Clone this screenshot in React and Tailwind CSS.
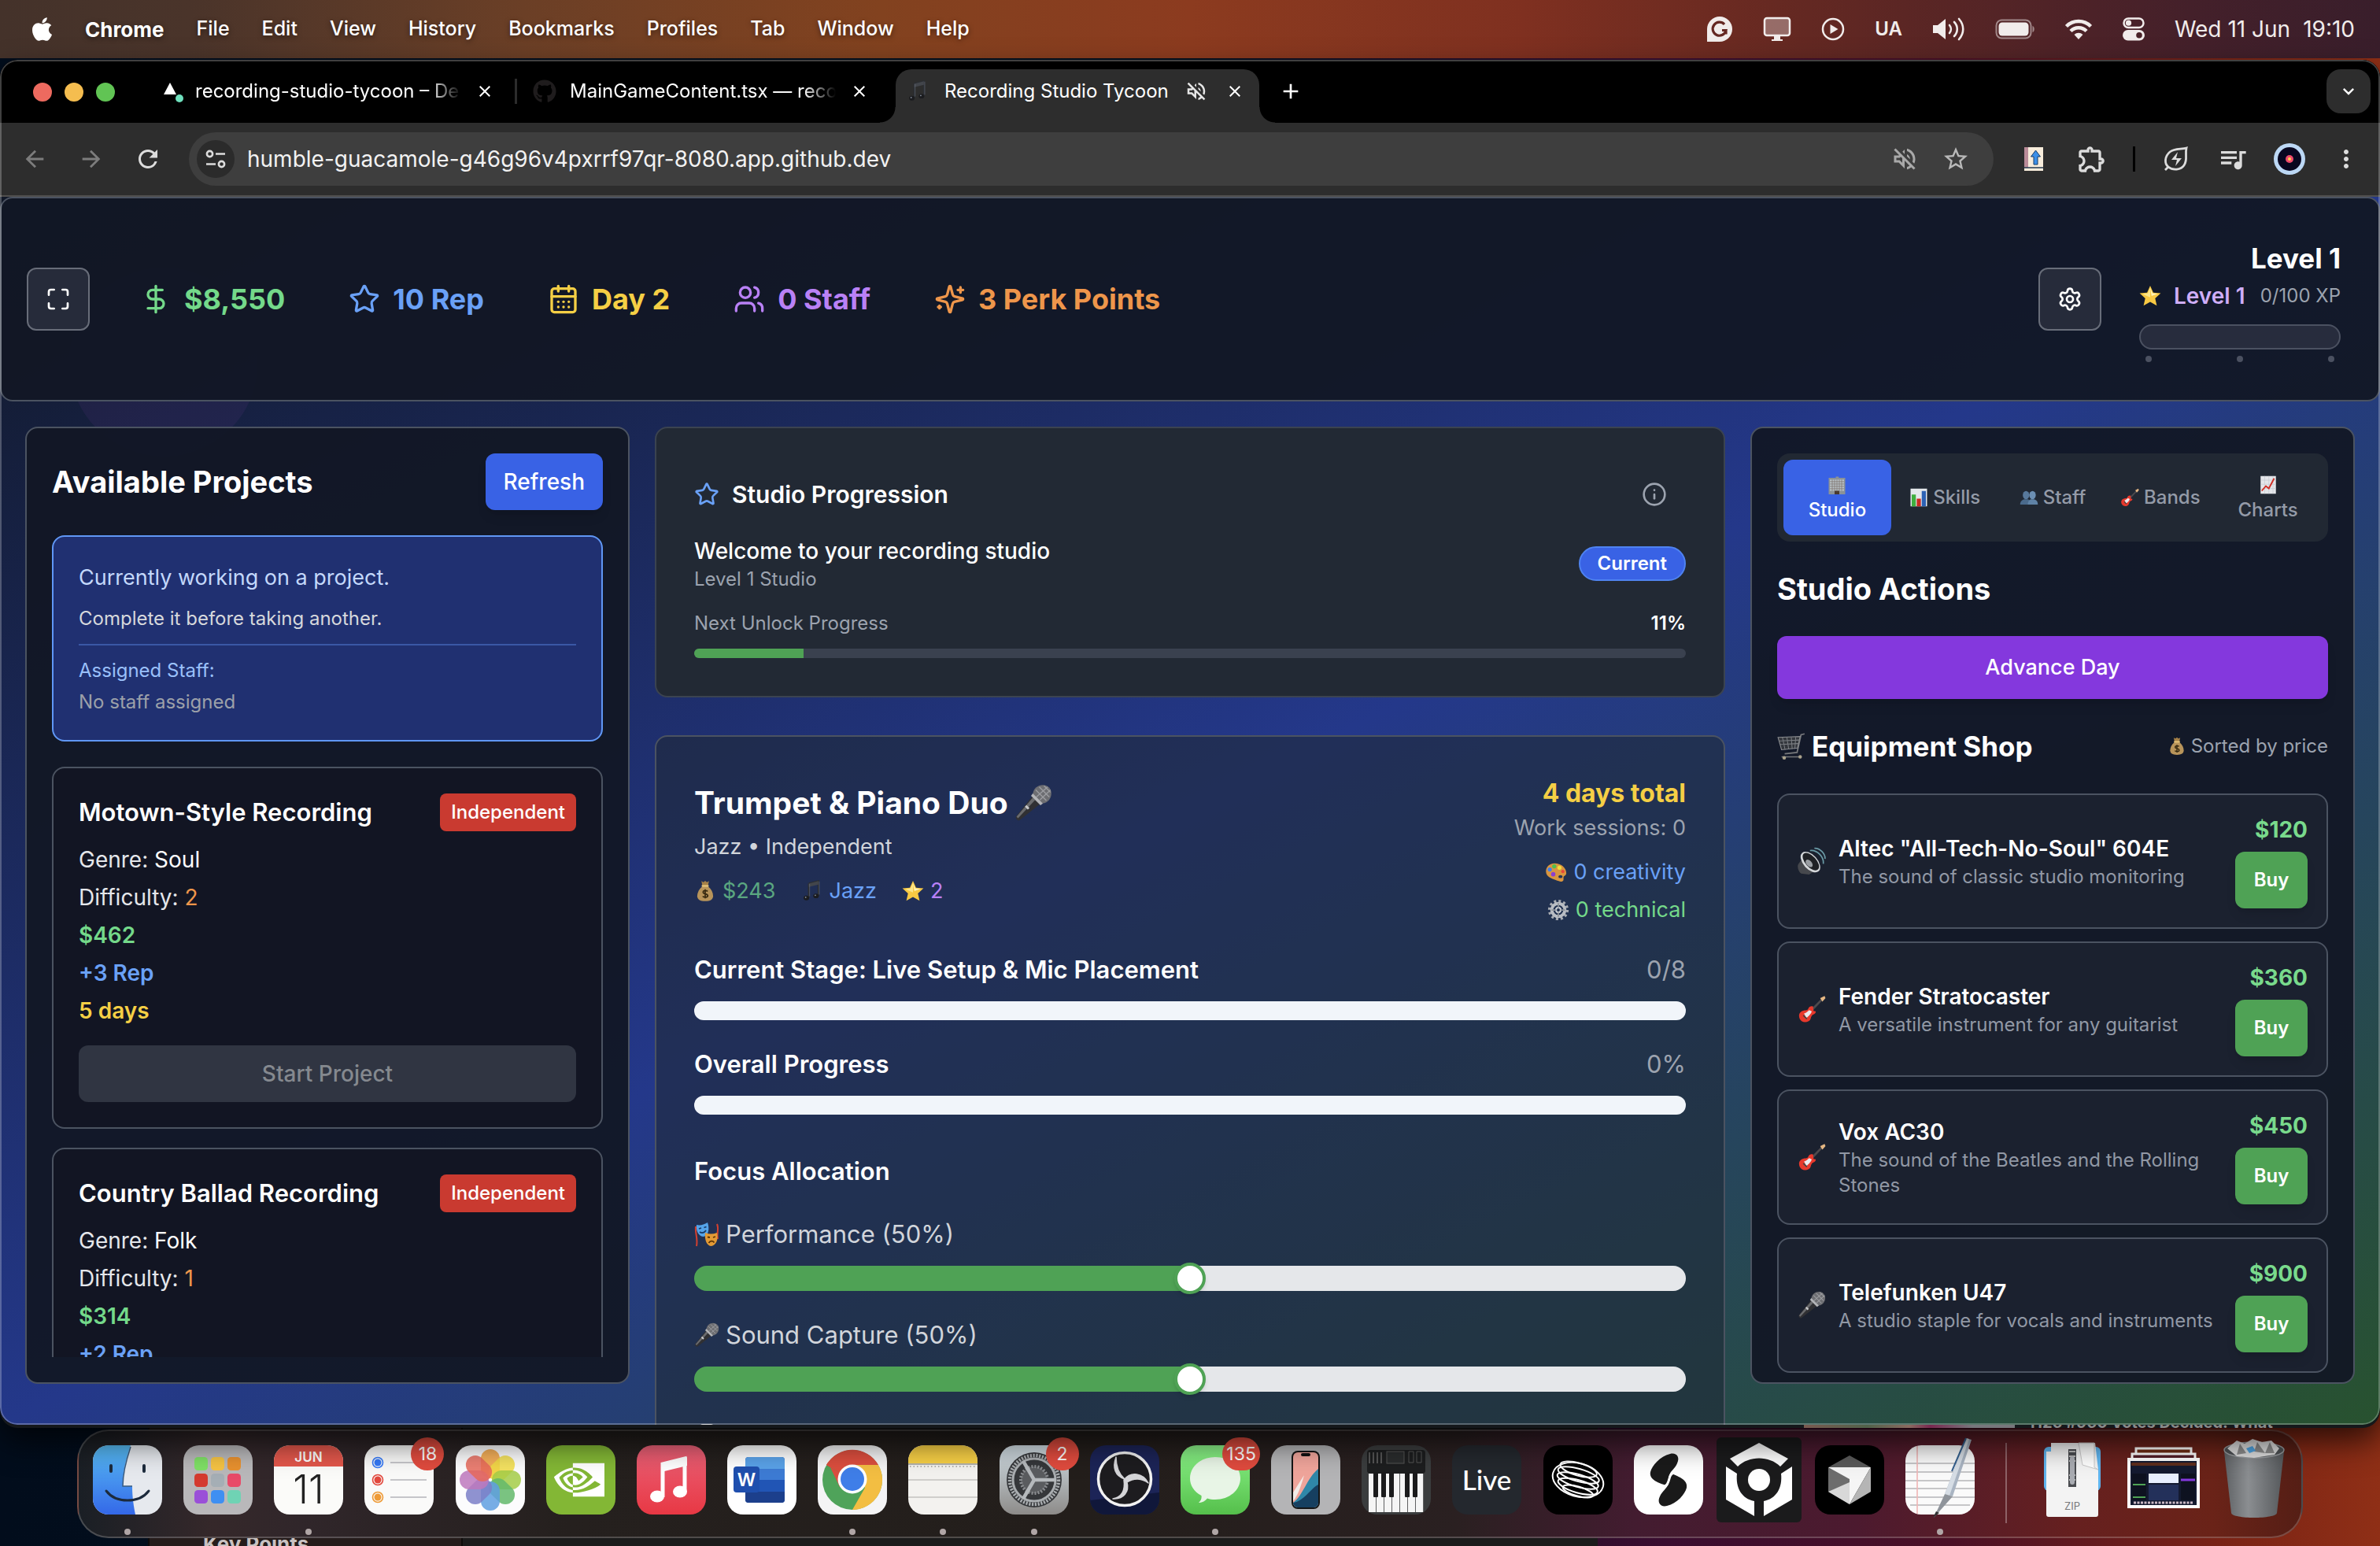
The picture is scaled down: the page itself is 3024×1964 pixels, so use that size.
import React from "react";
import { Star, CalendarDays, Users, DollarSign, Maximize, Settings, Info } from "lucide-react";
import {
  MdArrowBack, MdArrowForward, MdRefresh, MdStarBorder, MdOutlineExtension, MdQueueMusic,
  MdMoreVert, MdClose, MdAdd, MdKeyboardArrowDown, MdOutlineVolumeOff,
} from "react-icons/md";
import { FaApple, FaGithub } from "react-icons/fa";
import { SiNvidia } from "react-icons/si";

/* ---------- pictograms ---------- */

const pictograms = {
  star: (
    <>
      <path d="M16 1l4.500 10 10.800 1.100-8.100 7.300 2.400 10.600L16 24.600 6.400 30l2.400-10.600L.7 12.100 11.500 11z" fill="#f8c943" />
      <path d="M16 4l3.400 8 7.600.8-9 3.200z" fill="#fff3b8" />
      <path d="M16 4l-3.400 8-8 1 11.400 5z" fill="#fde68a" />
    </>
  ),
  mic: (
    <>
      <path d="M15 10.500l6.500 6.500L4.500 30.500c-1.600 1.200-4.300-1.500-3-3.200z" fill="#303033" />
      <path d="M15.500 11.500l2 2L3 29l-1.300-1.300z" fill="#6a6b6e" />
      <path d="M9.500 18.500l2.500 2.500" stroke="#c9cacc" strokeWidth="2" />
      <path d="M15.500 8.500C16 3.500 20 .8 24 .8c4.200 0 7.200 3 7.200 7.200 0 4-2.700 8-7.700 8.500z" fill="#6d6e72" />
      <path d="M18 5l9 9M21 2.500l8.500 8.500M25 1.500l5.500 5.500M28 2.500L18.500 11M30.500 5L21.500 13.500" stroke="#9c9da1" strokeWidth=".9" />
      <path d="M15.500 8l8.500 8.500-2 1.500-8-8z" fill="#b4b5b8" />
    </>
  ),
  guitar: (
    <>
      <path d="M13.500 17.500L27 4l1.500 1.500L15.500 19.500z" fill="#4d4a4d" />
      <path d="M25.500 3.500l5-2.500 1 2.500-3.500 4z" fill="#e6b884" />
      <path d="M17.500 13c-2-1-4.500 0-5.500 2.500-.8 2-2.500 1.500-5 2C2 18.500.5 23 2.500 27s6.500 4.500 10 2.500c3-1.800 2-4.500 3.800-6.500 1.500-1.800 3.700-1 4.200-4 .2-1-1.500-.5-2.500-1z" fill="#e8392c" />
      <path d="M13 17c-2 2-3.500 3-6 4 1.500.5 1.500 4 3.500 4.500 2-1.500 5-4.500 5.500-7z" fill="#e9ebee" />
      <path d="M6.500 23l4 4" stroke="#444" strokeWidth="1.500" />
    </>
  ),
  money: (
    <>
      <path d="M12 9c-5 4-7.500 9-7.500 14 0 5 4 7.500 11.500 7.500S27.500 28 27.500 23c0-5-2.500-10-7.500-14z" fill="#b8945a" />
      <path d="M10.500 1.500l3 1.500L16 1l2.500 2 3-1.500L20 8.500h-8z" fill="#a58148" />
      <path d="M11 8.500h10" stroke="#e9c77c" strokeWidth="2.500" />
      <path d="M19.500 16.500c-1-1.500-6.500-1.800-6.500 1.200s6.800 1.800 6.800 5c0 3-6 2.800-7.300.8M16 13.500v13" stroke="#3a2c12" strokeWidth="2" fill="none" />
    </>
  ),
  note: (
    <>
      <path d="M11 5l14-3.500v21M11 5v20" stroke="#2b2e33" strokeWidth="2.500" fill="none" />
      <path d="M11 5l14-3.500v5L11 10z" fill="#42454b" />
      <ellipse cx="7.500" cy="26" rx="4" ry="3.400" fill="#1b1c1f" />
      <ellipse cx="21.500" cy="23" rx="4" ry="3.400" fill="#1b1c1f" />
      <circle cx="6.500" cy="25" r="1" fill="#8a93a3" />
      <circle cx="20.500" cy="22" r="1" fill="#8a93a3" />
      <path d="M12.200 5.500v18M26.200 2v19" stroke="#6a7180" strokeWidth=".7" />
    </>
  ),
  palette: (
    <>
      <path d="M14 3C6 3 1 9 1.500 15.500 2 23 9 25 15 27c6 2 7.500 3.500 10.500 2 2.500-1.300 1-4 1.500-6 .5-1.800 4-2 4-5.500C31 9 23 3 14 3z" fill="#d9953f" />
      <ellipse cx="22.500" cy="22.500" rx="3" ry="2.200" fill="#21335a" />
      <circle cx="7" cy="12" r="3" fill="#3d7ff0" />
      <circle cx="13.500" cy="7.500" r="3" fill="#4fc04f" />
      <circle cx="21" cy="9.500" r="3" fill="#f2dc3c" />
      <circle cx="26" cy="15" r="2.400" fill="#e6483a" />
      <circle cx="12" cy="19" r="3.200" fill="#8b3fd0" />
    </>
  ),
  gear: (
    <>
      <circle cx="16" cy="16" r="13" fill="none" stroke="#a9adb3" strokeWidth="4" strokeDasharray="3.400 3.400" />
      <circle cx="16" cy="16" r="9.500" fill="none" stroke="#b9bdc3" strokeWidth="4.500" />
      <circle cx="16" cy="16" r="3.500" fill="none" stroke="#c9cdd3" strokeWidth="2.500" />
      <path d="M16 6v7M16 19v7M6 16h7M19 16h7" stroke="#8f949b" strokeWidth="2" />
    </>
  ),
  dial: (
    <>
      <rect x="6" y="1" width="20" height="30" rx="5" fill="#c9ccd2" />
      <circle cx="16" cy="16" r="7" fill="#55585f" />
    </>
  ),
  masks: (
    <>
      <path d="M2 6c-1 8 3 16 1 25M29 3c3 7-1 12 1 19" stroke="#d4402f" strokeWidth="2" fill="none" />
      <path d="M3 4c5 1 9 0 14-3 3 8 1 17-5 18C6 19 2 12 3 4z" fill="#55a4ea" />
      <path d="M6 9l3-1M12.500 7.500l3-1M7 13c3 2 6 1 8-2" stroke="#173a66" strokeWidth="1.800" fill="none" />
      <path d="M14 14c5 2 10 2 15 0 2 8-1 16-7 17-6 0-9-8-8-17z" fill="#e39a35" />
      <path d="M17 19.500l3 .5M24 20l3-1M18.500 27c2-3 5-3 7-.5" stroke="#5b3305" strokeWidth="1.800" fill="none" />
    </>
  ),
  speaker: (
    <>
      <path d="M1 19l6-8 14 15-8 5-9-1c-3-2-5-8-3-11z" fill="#46484d" />
      <ellipse cx="14.500" cy="17" rx="8" ry="14" transform="rotate(-42 14.500 17)" fill="#d4d7da" />
      <ellipse cx="15" cy="16.500" rx="6.200" ry="12" transform="rotate(-42 15 16.500)" fill="#1f2125" />
      <ellipse cx="13" cy="18.500" rx="3" ry="5" transform="rotate(-42 13 18.500)" fill="#9a9ea3" />
      <path d="M14 4c8-1 16 7 15 15M19 1.500c6-.5 12.500 6 12 12" stroke="#6a9aa6" strokeWidth="1.500" fill="none" />
    </>
  ),
  cart: (
    <>
      <path d="M31 2l-4 1-4.500 20-14 1.500" stroke="#77797c" strokeWidth="1.600" fill="none" />
      <path d="M1 6l25-1-3 13-18 2z" fill="#33363c" stroke="#8a8c90" strokeWidth="1" />
      <path d="M6 6l3 14M11 6l2 13M16 6l1 13M21 5.500L20 19M2 10l23-1M3 14l21-1" stroke="#7d8085" strokeWidth=".9" />
      <path d="M5 28h20" stroke="#77797c" strokeWidth="1.300" />
      <circle cx="8" cy="29" r="2" fill="#a9a28c" />
      <circle cx="26" cy="28" r="2" fill="#a9a28c" />
    </>
  ),
  building: (
    <>
      <path d="M2 4h12V2h5v2h11v28H2z" fill="#8b9297" />
      <path d="M4 7h24v19H4z" fill="#b9c2c7" />
      <path d="M4 10.500h24M4 14.500h24M4 18.500h24M4 22.500h24M8 7v19M12 7v19M16 7v19M20 7v19M24 7v19" stroke="#7d746d" strokeWidth="1" />
      <path d="M12 26h8v6h-8z" fill="#4a3a30" />
    </>
  ),
  bars: (
    <>
      <path d="M2 1h28v30H2z" fill="#e4e8ec" />
      <path d="M4 11h7v20H4z" fill="#3fae3f" />
      <path d="M12.500 18h7v13h-7z" fill="#c92a22" />
      <path d="M21 5h7v26h-7z" fill="#2d62b5" />
    </>
  ),
  people: (
    <>
      <ellipse cx="11" cy="12" rx="5.500" ry="7" fill="#58799c" />
      <ellipse cx="22" cy="12" rx="5.500" ry="7" fill="#6c8fb3" />
      <path d="M1 28c0-6 4-8 7-9h6c3 1 5 3 5 9z" fill="#4a6a8c" />
      <path d="M14 28c0-6 3-8 5-9h5c4 1 7 3 7 9z" fill="#5f82a6" />
    </>
  ),
  trend: (
    <>
      <path d="M3 1h26v30H3z" fill="#e4e6ea" />
      <path d="M3 8h26M3 15h26M3 22h26M10 1v30M17 1v30M24 1v30" stroke="#c3c8ce" strokeWidth=".8" />
      <path d="M5 26l7-8 5 4 9-17" stroke="#d02f26" strokeWidth="2.500" fill="none" />
    </>
  ),
};

function Pictogram({ name, className }) {
  return (
    <svg viewBox="0 0 32 32" aria-hidden="true" className={`shrink-0 ${className}`}>
      {pictograms[name]}
    </svg>
  );
}

/* ---------- macOS menu bar ---------- */

const menus = ["File", "Edit", "View", "History", "Bookmarks", "Profiles", "Tab", "Window", "Help"];

function MenuBar() {
  return (
    <header className="flex h-[74px] shrink-0 items-center justify-between bg-[linear-gradient(90deg,#44322a_0%,#4a342a_8%,#6b3f26_22%,#82421f_37%,#8c3b1f_50%,#7f3020_64%,#632822_76%,#44202a_92%,#391e2b_100%)] pr-8 pl-[40px] text-[25px] text-white">
      <nav className="flex items-center gap-[41px] [text-shadow:0_2px_6px_rgba(0,0,0,.5)]">
        <FaApple className="h-[34px] w-[27px]" />
        <span className="text-[26px] font-bold">Chrome</span>
        {menus.map((m) => (
          <span key={m} className="font-medium">{m}</span>
        ))}
      </nav>
      <div className="flex items-center gap-[38px] text-[#f1eceb]">
        <svg viewBox="0 0 34 34" className="size-[34px]">
          <path d="M17 1a16 16 0 0 1 0 32H1V17A16 16 0 0 1 17 1z" fill="currentColor" />
          <path d="M23 11a8.500 8.500 0 1 0 2 7.500h-5M25 18.500v5" fill="none" stroke="#642722" strokeWidth="3.200" />
        </svg>
        <svg viewBox="0 0 36 32" className="h-[32px] w-[36px]">
          <rect x="2" y="2" width="32" height="22" rx="3" fill="currentColor" fillOpacity=".35" stroke="currentColor" strokeWidth="2.500" />
          <path d="M14 25h8v4h3v2H11v-2h3z" fill="currentColor" />
        </svg>
        <svg viewBox="0 0 30 30" className="size-[30px]">
          <circle cx="15" cy="15" r="13" fill="none" stroke="currentColor" strokeWidth="2.500" />
          <path d="M11.500 9l10 6-10 6z" fill="currentColor" />
        </svg>
        <span className="text-[24px] font-semibold">UA</span>
        <svg viewBox="0 0 42 30" className="h-[30px] w-[42px]">
          <path d="M1 10h6l10-8v26L7 20H1z" fill="currentColor" />
          <path d="M22 10c2.500 3 2.500 7 0 10M28 6c5 5 5 13 0 18M34 2c7 8 7 18 0 26" fill="none" stroke="currentColor" strokeWidth="2.600" strokeLinecap="round" />
        </svg>
        <svg viewBox="0 0 50 26" className="h-[26px] w-[50px]">
          <rect x="1.500" y="1.500" width="44" height="23" rx="7" fill="none" stroke="currentColor" strokeOpacity=".5" strokeWidth="2" />
          <rect x="4.500" y="4.500" width="38" height="17" rx="4.500" fill="currentColor" />
          <path d="M47.500 9c3 1 3 7 0 8z" fill="currentColor" fillOpacity=".5" />
        </svg>
        <svg viewBox="0 0 36 28" className="h-[28px] w-[36px]">
          <path d="M2.500 10.500a22 22 0 0 1 31 0M8 16.500a14 14 0 0 1 20 0" fill="none" stroke="currentColor" strokeWidth="4.500" />
          <path d="M18 27l-5.500-6a8 8 0 0 1 11 0z" fill="currentColor" />
        </svg>
        <svg viewBox="0 0 28 30" className="h-[30px] w-[28px]">
          <rect x="1.500" y="1.500" width="25" height="11.500" rx="5.700" fill="none" stroke="currentColor" strokeWidth="2.500" />
          <circle cx="7.500" cy="7.200" r="3.600" fill="currentColor" />
          <rect x="0" y="16" width="28" height="13.500" rx="6.700" fill="currentColor" />
          <circle cx="21" cy="22.700" r="3.800" fill="#4a2228" />
        </svg>
        <span className="flex gap-4 text-[28px] whitespace-nowrap">
          <span>Wed 11 Jun</span>
          <span>19:10</span>
        </span>
      </div>
    </header>
  );
}

/* ---------- browser chrome ---------- */

function TabStrip() {
  return (
    <div className="flex h-[80px] shrink-0 items-end bg-black pr-3 text-[24px] text-[#e6e6e6]">
      <div className="flex h-[68px] w-[200px] shrink-0 items-center gap-4 pb-[10px] pl-[42px]">
        <span className="size-6 rounded-full bg-[#ed6a5f]" />
        <span className="size-6 rounded-full bg-[#f5bd4f]" />
        <span className="size-6 rounded-full bg-[#61c454]" />
      </div>
      <div className="flex h-[68px] w-[454px] shrink-0 items-center pb-3">
        <svg viewBox="0 0 32 32" className="ml-1 size-8">
          <path d="M12 5l8 15H4z" fill="#fff" />
          <circle cx="24" cy="25" r="5" fill="#6fe0bd" />
        </svg>
        <span className="ml-3 w-[338px] overflow-hidden whitespace-nowrap text-white [mask-image:linear-gradient(90deg,#000_88%,transparent)]">recording-studio-tycoon – De</span>
        <button aria-label="Close tab" className="ml-[18px]"><MdClose className="size-6 text-white" /></button>
      </div>
      <div className="flex h-[68px] w-[484px] shrink-0 items-center pb-3">
        <span className="h-8 w-[3px] bg-[#2c2c2c]" />
        <FaGithub className="ml-[20px] size-[30px] text-[#1f1c1d]" />
        <span className="ml-[17px] w-[338px] overflow-hidden whitespace-nowrap text-white [mask-image:linear-gradient(90deg,#000_88%,transparent)]">MainGameContent.tsx — reco</span>
        <button aria-label="Close tab" className="ml-[18px]"><MdClose className="size-6 text-white" /></button>
      </div>
      <div className="relative flex h-[68px] w-[462px] shrink-0 items-center rounded-t-[20px] bg-[#2d2d2d] pb-3">
        <span className="absolute bottom-0 -left-5 size-5 bg-[radial-gradient(circle_at_0_0,transparent_19px,#2d2d2d_20px)]" />
        <span className="absolute -right-5 bottom-0 size-5 bg-[radial-gradient(circle_at_100%_0,transparent_19px,#2d2d2d_20px)]" />
        <Pictogram name="note" className="ml-[14px] size-7" />
        <span className="ml-5 w-[290px] whitespace-nowrap text-white">Recording Studio Tycoon</span>
        <MdOutlineVolumeOff className="ml-[15px] size-[30px] text-[#e6e6e6]" />
        <button aria-label="Close tab" className="ml-[22px]"><MdClose className="size-6 text-white" /></button>
      </div>
      <button aria-label="New tab" className="mb-[24px] ml-[24px]"><MdAdd className="size-8 text-white" /></button>
      <button aria-label="Search tabs" className="mb-3 ml-auto flex size-14 items-center justify-center rounded-[18px] bg-[#2d2d2d]">
        <MdKeyboardArrowDown className="size-7 text-white" />
      </button>
    </div>
  );
}

function Toolbar() {
  return (
    <div className="flex h-[94px] shrink-0 items-center border-b-2 border-[#504f4e] bg-[#2d2d2d] pr-[25px] pl-6 text-[#dcdcdc]">
      <div className="flex w-[216px] shrink-0 items-center gap-8">
        <button aria-label="Back"><MdArrowBack className="size-10 p-[3px] text-[#7c7c7c]" /></button>
        <button aria-label="Forward"><MdArrowForward className="size-10 p-[3px] text-[#7c7c7c]" /></button>
        <button aria-label="Reload"><MdRefresh className="size-10 p-[2px]" /></button>
      </div>
      <div className="flex h-[68px] flex-1 items-center rounded-full bg-[#3e3e3e] pr-[30px] pl-[10px]">
        <button aria-label="Site information" className="flex size-12 items-center justify-center rounded-full bg-[#2b2b2b]">
          <svg viewBox="0 0 26 26" className="size-[26px]" fill="none" stroke="currentColor" strokeWidth="2.600">
            <circle cx="5.500" cy="6.500" r="3.600" />
            <path d="M13 6.500h12M1 19.500h12" />
            <circle cx="20.500" cy="19.500" r="3.600" />
          </svg>
        </button>
        <input aria-label="Address" readOnly value="humble-guacamole-g46g96v4pxrrf97qr-8080.app.github.dev" className="ml-4 flex-1 bg-transparent text-[28px] text-[#f2f2f2] outline-none" />
        <MdOutlineVolumeOff className="size-9 text-[#a9a9a9]" />
        <button aria-label="Bookmark this page" className="ml-[29px]"><MdStarBorder className="size-9 text-[#b9b9b9]" /></button>
      </div>
      <div className="ml-[38px] flex items-center">
        <svg viewBox="0 0 26 32" className="h-8 w-[26px]">
          <path d="M1 1h24v30H1z" fill="#f7ecdb" />
          <path d="M1 1h5v26H1z" fill="#b98b98" />
          <path d="M1 27h24" stroke="#22384f" strokeWidth="1.500" />
          <path d="M15.500 5l6 8h-3.500v10h-5V13H9.500z" fill="#3c8fe8" stroke="#173e6b" />
        </svg>
        <MdOutlineExtension className="ml-[41px] size-[40px]" />
        <span className="ml-[32px] h-8 w-[3px] bg-black" />
        <svg viewBox="0 0 36 36" className="ml-[34px] size-9" fill="none" stroke="currentColor" strokeWidth="2.800">
          <path d="M31 4c-6 2-15 0-21 5-7 6-7 15-2 19 6 5 16 4 20-2 5-7 1-13 3-22zM8 28l-4 4" />
          <path d="M20 9l-8 10h7l-2 8 8-10h-7z" fill="currentColor" stroke="none" />
        </svg>
        <MdQueueMusic className="ml-[34px] size-[40px]" />
        <span className="ml-[32px] flex size-10 items-center justify-center rounded-full bg-[#bcd8f5]">
          <span className="flex size-[30px] items-center justify-center rounded-full bg-[#080720]">
            <span className="flex size-[10px] items-center justify-center rounded-full bg-[#ee4a6c]"><span className="size-[4px] rounded-full bg-[#ffd34d]" /></span>
          </span>
        </span>
        <button aria-label="Menu" className="ml-[34px]"><MdMoreVert className="size-9" /></button>
      </div>
    </div>
  );
}

/* ---------- game ---------- */

function Sparkles({ className }) {
  return (
    <svg viewBox="0 0 24 24" fill="none" stroke="currentColor" strokeWidth="2" strokeLinecap="round" strokeLinejoin="round" className={className}>
      <path d="M9.937 15.500A2 2 0 0 0 8.500 14.063l-6.135-1.582a.5.5 0 0 1 0-.962L8.500 9.936A2 2 0 0 0 9.937 8.500l1.582-6.135a.5.5 0 0 1 .963 0L14.063 8.500A2 2 0 0 0 15.500 9.937l6.135 1.581a.5.5 0 0 1 0 .964L15.500 14.063a2 2 0 0 0-1.437 1.437l-1.582 6.135a.5.5 0 0 1-.963 0z" />
      <path d="M20 3v4M22 5h-4M4 17v2M5 18H3" />
    </svg>
  );
}

const stats = [
  { icon: DollarSign, text: "$8,550", color: "text-[#74d98a]" },
  { icon: Star, text: "10 Rep", color: "text-[#6aa1f7]" },
  { icon: CalendarDays, text: "Day 2", color: "text-[#f5cf45]" },
  { icon: Users, text: "0 Staff", color: "text-[#b981f6]" },
  { icon: Sparkles, text: "3 Perk Points", color: "text-[#ee964b]" },
];

function GameHeader() {
  return (
    <section className="relative flex h-[260px] shrink-0 items-center rounded-2xl border-2 border-[#4b5361] bg-[#121725]/95 pr-12 pl-8">
      <button aria-label="Fullscreen" className="flex size-20 items-center justify-center rounded-xl border-2 border-[#686d79] bg-[#262b3a]">
        <Maximize className="size-8 text-white" />
      </button>
      <div className="ml-16 flex items-center gap-[81px]">
        {stats.map(({ icon: Icon, text, color }) => (
          <div key={text} className={`flex items-center gap-4 text-[36px] font-bold ${color}`}>
            <Icon className="size-10" strokeWidth={2} />
            <span>{text}</span>
          </div>
        ))}
      </div>
      <button aria-label="Settings" className="mr-12 ml-auto flex size-20 items-center justify-center rounded-xl border-2 border-[#686d79] bg-[#262b3a]">
        <Settings className="size-8 text-white" />
      </button>
      <div className="w-64">
        <p className="text-right text-[35px] leading-[56px] font-bold text-white">Level 1</p>
        <div className="flex h-10 items-center">
          <Pictogram name="star" className="size-7" />
          <span className="ml-4 text-[28px] font-semibold text-[#cfaef9]">Level 1</span>
          <span className="ml-auto text-[24px] text-[#9ca3af]">0/100 XP</span>
        </div>
        <div role="progressbar" aria-label="XP" aria-valuenow={0} className="mt-4 h-8 rounded-full border-2 border-[#4b5161] bg-[#272c3d]" />
        <div className="mt-2 flex justify-between px-2">
          <span className="size-2 rounded-full bg-[#4b5161]" />
          <span className="size-2 rounded-full bg-[#4b5161]" />
          <span className="size-2 rounded-full bg-[#4b5161]" />
        </div>
      </div>
    </section>
  );
}

const projects = [
  { title: "Motown-Style Recording", genre: "Soul", difficulty: 2, pay: "$462", rep: "+3 Rep", days: "5 days" },
  { title: "Country Ballad Recording", genre: "Folk", difficulty: 1, pay: "$314", rep: "+2 Rep" },
];

function ProjectCard({ title, genre, difficulty, pay, rep, days }) {
  return (
    <article className="rounded-2xl border-2 border-[#4b5361] bg-[#121523] p-8">
      <div className="flex h-12 items-center justify-between">
        <h3 className="text-[31px] font-semibold whitespace-nowrap text-white">{title}</h3>
        <span className="flex h-12 items-center rounded-lg bg-[#c93a30] px-[14px] text-[24px] font-medium text-white">Independent</span>
      </div>
      <div className="mt-4 space-y-2 text-[28px] leading-10 text-[#e5e7eb]">
        <p>Genre: <span className="text-white">{genre}</span></p>
        <p>Difficulty: <span className="text-[#ee964b]">{difficulty}</span></p>
        <p className="font-semibold text-[#74d98a]">{pay}</p>
        <p className="font-semibold text-[#6aa1f7]">{rep}</p>
        {days && <p className="font-semibold text-[#f5cf45]">{days}</p>}
      </div>
      {days && (
        <button disabled className="mt-6 h-[72px] w-full rounded-xl bg-[#303542] text-[28px] font-medium text-[#85898f]">Start Project</button>
      )}
    </article>
  );
}

function ProjectsPanel() {
  return (
    <section className="mb-[52px] flex min-h-0 flex-col rounded-2xl border-2 border-[#4b5361] bg-[#121725]/95 p-8">
      <div className="flex h-[72px] shrink-0 items-center justify-between">
        <h2 className="text-[38px] font-bold text-white">Available Projects</h2>
        <button className="h-[72px] rounded-xl bg-[#3962e5] px-[23px] text-[28px] font-medium text-white shadow-lg">Refresh</button>
      </div>
      <div className="mt-8 shrink-0 rounded-2xl border-2 border-[#6097f5] bg-[#203071] p-8">
        <p className="text-[27px] leading-10 text-[#c3d8fb]">Currently working on a project.</p>
        <p className="mt-4 text-[24px] leading-8 text-[#d6d8dc]">Complete it before taking another.</p>
        <div className="mt-4 border-t-2 border-[#3a57a5] pt-4 text-[24px] leading-8">
          <p className="text-[#9ac0fa]">Assigned Staff:</p>
          <p className="mt-2 text-[#9ca0a9]">No staff assigned</p>
        </div>
      </div>
      <div className="mt-8 flex min-h-0 flex-1 flex-col gap-6 overflow-hidden">
        {projects.map((p) => (
          <div key={p.title} className="shrink-0 last:[&>article]:h-[460px]">
            <ProjectCard {...p} />
          </div>
        ))}
      </div>
    </section>
  );
}

function ProgressionCard() {
  return (
    <section className="shrink-0 rounded-2xl border-2 border-[#3b4350] bg-[#222934] p-12">
      <div className="flex h-[72px] items-center">
        <Star className="size-8 text-[#6aa1f7]" />
        <h2 className="ml-4 text-[30px] font-semibold text-white">Studio Progression</h2>
        <button aria-label="About studio progression" className="ml-auto px-6"><Info className="size-8 text-[#9ca3af]" /></button>
      </div>
      <div className="mt-4 flex items-center justify-between">
        <div>
          <p className="text-[28px] leading-10 font-medium text-white">Welcome to your recording studio</p>
          <p className="text-[24px] leading-8 text-[#9ca3af]">Level 1 Studio</p>
        </div>
        <span className="flex h-11 items-center rounded-full border-2 border-[#4f83f1] bg-[#3962e5] px-[22px] text-[24px] font-semibold text-white">Current</span>
      </div>
      <div className="mt-6 flex justify-between text-[24px] leading-8">
        <span className="text-[#9ca3af]">Next Unlock Progress</span>
        <span className="font-semibold text-white">11%</span>
      </div>
      <div role="progressbar" aria-label="Next unlock progress" aria-valuenow={11} className="mt-4 h-3 overflow-hidden rounded-full bg-[#3a414f]">
        <div className="h-full w-[11%] bg-[#4fa255]" />
      </div>
    </section>
  );
}

function StageBar({ label, value }) {
  return (
    <div className="mt-8">
      <div className="flex justify-between text-[31px] leading-[48px]">
        <span className="font-semibold text-white">{label}</span>
        <span className="text-[#9ca3af]">{value}</span>
      </div>
      <div role="progressbar" aria-label={label} aria-valuenow={0} className="mt-4 h-6 rounded-full bg-[#f1f5fa]" />
    </div>
  );
}

function FocusSlider({ icon, label, id }) {
  return (
    <div className="mt-8">
      <label htmlFor={id} className="flex h-12 items-center gap-2 text-[31px] text-[#d1d5db]">
        <Pictogram name={icon} className="size-8" />
        {label}
      </label>
      <input
        id={id}
        type="range"
        defaultValue={50}
        className="mt-4 block h-8 w-full appearance-none rounded-full bg-[linear-gradient(90deg,#4fa255_50%,#e5e7ea_50%)] [&::-webkit-slider-thumb]:size-10 [&::-webkit-slider-thumb]:appearance-none [&::-webkit-slider-thumb]:rounded-full [&::-webkit-slider-thumb]:border-4 [&::-webkit-slider-thumb]:border-[#4fa255] [&::-webkit-slider-thumb]:bg-white [&::-webkit-slider-thumb]:shadow-md"
      />
    </div>
  );
}

function ActiveProject() {
  return (
    <section className="mt-12 shrink-0 rounded-2xl border-2 border-[#4b5361] bg-[#1f2937]/60 p-12">
      <div className="flex justify-between">
        <div className="pt-2">
          <h2 className="flex h-14 items-center gap-2 text-[39px] font-bold text-white">
            Trumpet &amp; Piano Duo <Pictogram name="mic" className="size-12" />
          </h2>
          <p className="mt-2 text-[27px] leading-10 text-[#d1d5db]">Jazz • Independent</p>
          <div className="mt-4 flex h-10 items-center gap-8 text-[27px]">
            <span className="flex items-center gap-2 text-[#5aa680]"><Pictogram name="money" className="size-7" />$243</span>
            <span className="flex items-center gap-2 text-[#6aa1f7]"><Pictogram name="note" className="size-7" />Jazz</span>
            <span className="flex items-center gap-2 text-[#b981f6]"><Pictogram name="star" className="size-7" />2</span>
          </div>
        </div>
        <div className="flex flex-col items-end text-[27px] leading-10">
          <p className="text-[32px] leading-[48px] font-bold text-[#f5cf45]">4 days total</p>
          <p className="text-[#9ca3af]">Work sessions: 0</p>
          <p className="mt-4 flex items-center gap-2 text-[#6aa1f7]"><Pictogram name="palette" className="size-7" />0 creativity</p>
          <p className="mt-2 flex items-center gap-2 text-[#74d98a]"><Pictogram name="gear" className="size-7" />0 technical</p>
        </div>
      </div>
      <StageBar label="Current Stage: Live Setup & Mic Placement" value="0/8" />
      <StageBar label="Overall Progress" value="0%" />
      <h3 className="mt-12 text-[31px] leading-[48px] font-semibold text-white">Focus Allocation</h3>
      <FocusSlider id="performance" icon="masks" label="Performance (50%)" />
      <FocusSlider id="capture" icon="mic" label="Sound Capture (50%)" />
      <div className="mt-8 flex h-12 items-center"><Pictogram name="dial" className="size-8" /></div>
    </section>
  );
}

const gameTabs = [
  { icon: "building", label: "Studio", stacked: true, active: true },
  { icon: "bars", label: "Skills" },
  { icon: "people", label: "Staff" },
  { icon: "guitar", label: "Bands" },
  { icon: "trend", label: "Charts", stacked: true },
];

const equipment = [
  { icon: "speaker", name: 'Altec "All-Tech-No-Soul" 604E', text: "The sound of classic studio monitoring", price: "$120" },
  { icon: "guitar", name: "Fender Stratocaster", text: "A versatile instrument for any guitarist", price: "$360" },
  { icon: "guitar", name: "Vox AC30", text: "The sound of the Beatles and the Rolling Stones", price: "$450" },
  { icon: "mic", name: "Telefunken U47", text: "A studio staple for vocals and instruments", price: "$900" },
];

function StudioPanel() {
  return (
    <section className="mb-[52px] min-h-0 overflow-hidden rounded-2xl border-2 border-[#4b5361] bg-[#121725]/95 p-8">
      <div role="tablist" className="grid h-28 grid-cols-5 rounded-2xl bg-[#212833] p-2 text-[24px] leading-8 font-medium">
        {gameTabs.map((t) => (
          <button
            key={t.label}
            role="tab"
            aria-selected={!!t.active}
            className={`flex items-center justify-center rounded-xl ${t.stacked ? "flex-col" : "gap-[6px]"} ${t.active ? "bg-[#3962e5] text-white" : "text-[#949ba8]"}`}
          >
            <span className="flex h-8 items-center"><Pictogram name={t.icon} className="size-6" /></span>
            {t.label}
          </button>
        ))}
      </div>
      <h2 className="mt-8 text-[38px] leading-[56px] font-bold text-white">Studio Actions</h2>
      <button className="mt-8 h-20 w-full rounded-xl bg-[#8438dd] text-[27px] font-medium text-white shadow-lg">Advance Day</button>
      <div className="mt-8 flex h-14 items-center justify-between">
        <h3 className="flex items-center gap-2 text-[35px] font-bold text-white">
          <Pictogram name="cart" className="size-9" />Equipment Shop
        </h3>
        <span className="flex items-center gap-[6px] text-[24px] text-[#9ca3af]"><Pictogram name="money" className="size-6" />Sorted by price</span>
      </div>
      <ul className="mt-8 space-y-4">
        {equipment.map((e) => (
          <li key={e.name} className="flex items-center rounded-2xl border-2 border-[#4b5361] bg-[#1b212f] p-6">
            <Pictogram name={e.icon} className="size-9" />
            <div className="ml-4 flex-1">
              <p className="text-[28px] leading-10 font-semibold text-white">{e.name}</p>
              <p className="text-[24px] leading-8 text-[#9198a5]">{e.text}</p>
            </div>
            <div className="ml-4 flex flex-col items-end">
              <span className="text-[28px] leading-10 font-bold text-[#79da8c]">{e.price}</span>
              <button className="mt-2 h-[72px] w-[92px] rounded-xl bg-[#4fa255] text-[24px] font-semibold text-white shadow-lg">Buy</button>
            </div>
          </li>
        ))}
      </ul>
    </section>
  );
}

function BrowserWindow() {
  return (
    <div className="relative z-10 mt-[2px] flex min-h-0 flex-1 flex-col overflow-hidden rounded-[22px] bg-black shadow-[0_4px_0_#15181b,0_20px_40px_rgba(0,0,0,.7)]">
      <TabStrip />
      <Toolbar />
      <div className="relative flex min-h-0 flex-1 flex-col overflow-hidden bg-[linear-gradient(to_bottom_right,#111827,#24388a_50%,#28522f)]">
        <span className="absolute top-[90px] left-[88px] size-60 rounded-full bg-[#a04fd0]/8" />
        <GameHeader />
        <main className="relative grid min-h-0 flex-1 grid-cols-[minmax(0,48fr)_minmax(0,85fr)_minmax(0,48fr)] grid-rows-[minmax(0,1fr)] gap-8 px-8 pt-8">
          <ProjectsPanel />
          <div className="flex min-h-0 flex-col">
            <ProgressionCard />
            <ActiveProject />
          </div>
          <StudioPanel />
        </main>
      </div>
      <div className="pointer-events-none absolute inset-0 rounded-[22px] border-2 border-white/25" />
    </div>
  );
}

/* ---------- dock ---------- */

const tile = (fill) => <rect x="0" y="0" width="88" height="88" rx="20" fill={fill} />;

const dockApps = [
  { name: "Finder", dot: true, art: (
    <>
      {tile("#e6e9ee")}
      <path d="M20 0h28c-6 18-10 34-10 52h12c0 14 2 26 4 36H20A20 20 0 0 1 0 68V20A20 20 0 0 1 20 0z" fill="url(#gFinder)" />
      <path d="M23 26v7M65 26v7" stroke="#1c2a3c" strokeWidth="4" strokeLinecap="round" />
      <path d="M17 58c12 16 42 16 54 0" stroke="#1c2a3c" strokeWidth="3" fill="none" strokeLinecap="round" />
      <path d="M48 2c-6 18-10 34-10 50h12" stroke="#3a5c80" strokeWidth="1.500" fill="none" />
    </>
  ) },
  { name: "Launchpad", art: (
    <>
      {tile("#b9b8ba")}
      {["#7fe066", "#f5c344", "#e8912f", "#d43a2f", "#a5aeb5", "#e84a68", "#9a4fd8", "#3f8ff2", "#6fd3b4"].map((c, i) => (
        <rect key={c} x={14 + (i % 3) * 21} y={15 + Math.floor(i / 3) * 21} width="17" height="17" rx="4.500" fill={c} />
      ))}
    </>
  ) },
  { name: "Calendar", dot: true, art: (
    <>
      {tile("#fbfbf9")}
      <path d="M20 0h48a20 20 0 0 1 20 20v7H0v-7A20 20 0 0 1 20 0z" fill="#e2574b" />
      <text x="44" y="21" textAnchor="middle" fontSize="17" fontWeight="600" fill="#fff">JUN</text>
      <text x="44" y="74" textAnchor="middle" fontSize="50" fontWeight="300" fill="#222">11</text>
    </>
  ) },
  { name: "Reminders", badge: "18", art: (
    <>
      {tile("#fafaf9")}
      {["#3478f6", "#e2483d", "#ee9a36"].map((c, i) => (
        <g key={c}>
          <circle cx="17" cy={22 + i * 22} r="6.500" fill="none" stroke={c} strokeWidth="1.600" />
          <circle cx="17" cy={22 + i * 22} r="4.500" fill={c} />
          <path d={`M33 ${22 + i * 22}h46`} stroke="#b5b5b8" strokeWidth="1.600" />
        </g>
      ))}
    </>
  ) },
  { name: "Photos", art: (
    <>
      {tile("#fcfcfd")}
      {["#f2a13c", "#f2dd45", "#a5cc48", "#63b96b", "#5f9fe0", "#7b7fc8", "#bd78bd", "#e8695a"].map((c, i) => (
        <rect key={c} x="32" y="5" width="24" height="37" rx="12" fill={c} fillOpacity=".85" transform={`rotate(${i * 45} 44 44)`} />
      ))}
    </>
  ) },
  { name: "GeForce NOW", art: (<>{tile("#83b735")}<SiNvidia x="10" y="12" size={64} color="#fff" /></>) },
  { name: "Music", art: (
    <>
      {tile("url(#gMusic)")}
      <path d="M33 66V24l28-7v42" fill="none" stroke="#fff" strokeWidth="5" />
      <path d="M31 23l33-8v11l-33 8z" fill="#fff" />
      <ellipse cx="26" cy="65" rx="9" ry="7.500" fill="#fff" />
      <ellipse cx="55" cy="59" rx="9" ry="7.500" fill="#fff" />
    </>
  ) },
  { name: "Word", art: (
    <>
      {tile("#fff")}
      <rect x="23" y="15" width="50" height="58" rx="4" fill="#2155b5" />
      <path d="M27 15h42a4 4 0 0 1 4 4v11H23V19a4 4 0 0 1 4-4z" fill="#5aa2e8" />
      <path d="M23 30h50v14H23z" fill="#3d7bd4" />
      <path d="M23 59h50v10a4 4 0 0 1-4 4H27a4 4 0 0 1-4-4z" fill="#1c3f8c" />
      <rect x="8" y="27" width="33" height="33" rx="4" fill="#1f4fae" />
      <text x="24.500" y="52" textAnchor="middle" fontSize="23" fontWeight="600" fill="#fff">W</text>
    </>
  ) },
  { name: "Google Chrome", dot: true, art: (
    <>
      {tile("#f4f4f5")}
      <circle cx="44" cy="44" r="38" fill="#4fa35a" />
      <path d="M44 44L11 25a38 38 0 0 1 66 0z" fill="#dc4e3e" />
      <path d="M44 25h33a38 38 0 0 1-33 57l16-28z" fill="#f3be42" />
      <path d="M44 44L11 25a38 38 0 0 1 2-3l15 31z" fill="#dc4e3e" />
      <circle cx="44" cy="43" r="18.500" fill="#fff" />
      <circle cx="44" cy="43" r="15" fill="#3f7ee8" />
    </>
  ) },
  { name: "Notes", dot: true, art: (
    <>
      {tile("#f3f2ef")}
      <path d="M20 0h48a20 20 0 0 1 20 20v3H0v-3A20 20 0 0 1 20 0z" fill="#f7cf45" />
      <path d="M0 24h88" stroke="#9d9b95" strokeWidth="1.500" />
      <path d="M2 27h84" stroke="#b5b3ad" strokeWidth="2" strokeDasharray="1.500 3" />
      <path d="M0 44h88M0 66h88" stroke="#cfcecb" strokeWidth="1.800" />
    </>
  ) },
  { name: "System Settings", dot: true, badge: "2", art: (
    <>
      {tile("url(#gSettings)")}
      <circle cx="44" cy="44" r="35" fill="#35373a" />
      <circle cx="44" cy="44" r="31" fill="none" stroke="#a9adb0" strokeWidth="4.500" strokeDasharray="2.200 1.600" />
      <circle cx="44" cy="44" r="27" fill="none" stroke="#a9adb0" strokeWidth="3" />
      <circle cx="44" cy="44" r="17" fill="#5a5c5f" stroke="#8a8d90" strokeWidth="4" strokeDasharray="2 2" />
      <path d="M44 44h28M44 44L30 20M44 44L30 68" stroke="#b5b9bc" strokeWidth="4.500" />
    </>
  ) },
  { name: "OBS", art: (
    <>
      {tile("#1c2457")}
      <path d="M0 70l88-10v8a20 20 0 0 1-20 20H20A20 20 0 0 1 0 68z" fill="#10173a" />
      <circle cx="44" cy="43" r="33.500" fill="#1d1c1f" stroke="#f2f2f2" strokeWidth="3.500" />
      <path d="M33 15c-5 14-1 24 11 28-8-7-11-16-11-28zM43 44c9-11 24-9 31 4-8-6-18-7-27-1 3 12-4 22-18 21 11-2 16-10 14-24z" fill="#d5d5d8" stroke="#d5d5d8" strokeWidth="1.500" strokeLinejoin="round" />
    </>
  ) },
  { name: "Messages", dot: true, badge: "135", art: (
    <>
      {tile("url(#gMessages)")}
      <path d="M44 15c18 0 32 12 32 27S62 69 44 69c-4 0-7-.5-10-1.500-3 4-7 5.500-11 5.500 3-2.500 4-6 3.500-9C17 59 12 51 12 42c0-15 14-27 32-27z" fill="#e8f5e6" />
    </>
  ) },
  { name: "iPhone Mirroring", art: (
    <>
      {tile("#b4b4b6")}
      <rect x="26" y="7" width="36" height="74" rx="8" fill="#151515" />
      <rect x="28" y="9" width="32" height="70" rx="6" fill="#f0a59b" />
      <path d="M60 30v43a6 6 0 0 1-6 6H34a6 6 0 0 1-6-6c12-8 18-32 32-43z" fill="#2f87a8" />
      <path d="M60 50v23a6 6 0 0 1-6 6H34c-3 0-5-2-6-6 14-2 22-18 32-23z" fill="#163f60" />
      <path d="M42 38c-4 14-8 26-14 33V60z" fill="#f3ece8" />
      <rect x="38" y="10" width="12" height="4" rx="2" fill="#111" />
    </>
  ) },
  { name: "MIDI keyboard", art: (
    <>
      {tile("#3b3d3e")}
      <rect x="7" y="6" width="74" height="30" rx="4" fill="#1d1e1f" />
      <path d="M10 9v14M15 9v14M20 9v14M25 9v14" stroke="#555" strokeWidth="2" />
      <rect x="32" y="8" width="22" height="15" fill="#2a2c2d" stroke="#555" />
      <path d="M60 8h6v14h-6zM70 8h6v14h-6z" fill="none" stroke="#555" />
      {[0, 1, 2, 3, 4, 5, 6].map((i) => (
        <rect key={i} x={9 + i * 10} y="36" width="9.200" height="49" fill="#f5f5f5" />
      ))}
      {[0, 1, 2, 4, 5].map((i) => (
        <rect key={i} x={15 + i * 10} y="34" width="6" height="32" rx="1" fill="#1b1b1c" />
      ))}
    </>
  ) },
  { name: "Live", art: (<>{tile("#24282e")}<text x="44" y="57" textAnchor="middle" className="font-[Lato] text-[35px] font-medium" fill="#fff">Live</text></>) },
  { name: "Orbit", art: (
    <>
      {tile("#000")}
      <g fill="none" stroke="#fff" strokeWidth="2" transform="rotate(16 44 44)">
        <ellipse cx="44" cy="44" rx="33" ry="21" />
        <ellipse cx="41" cy="31" rx="24" ry="8" />
        <ellipse cx="43" cy="38" rx="27" ry="8" />
        <ellipse cx="44" cy="45" rx="27" ry="8" />
        <ellipse cx="46" cy="52" rx="26" ry="8" />
        <ellipse cx="48" cy="58" rx="20" ry="6" />
      </g>
    </>
  ) },
  { name: "Splice", art: (
    <>
      {tile("#fff")}
      <path d="M46 11c8-2 13 4 9 12-3 7-8 9-10 15-2 5 0 9-4 13-9-3-22-7-20-17 2-8 12-20 25-23z" fill="#1a1a1a" />
      <path d="M42 77c-8 2-13-4-9-12 3-7 9-10 11-16 2-5-1-9 4-13 9 4 21 8 19 18-2 8-12 20-25 23z" fill="#1a1a1a" />
      <path d="M52 34c-8 3-6 9-9 14-1 3-3 4-6 5" fill="none" stroke="#fff" strokeWidth="3" />
    </>
  ) },
  { name: "Mixcraft", large: true, art: (
    <>
      <rect x="0" y="0" width="108" height="108" rx="6" fill="#1b1b1c" />
      <path d="M54 7l37 20-10 10c-14-14-40-14-54 0L17 27z" fill="#fff" />
      <path d="M12 37l14 9c-2 18 6 32 22 35v19L12 79zM96 37l-14 9c2 18-6 32-22 35v19l36-21z" fill="#fff" />
      <circle cx="54" cy="54" r="14" fill="#fff" />
    </>
  ) },
  { name: "Cursor", art: (
    <>
      {tile("#000")}
      <path d="M44 13l27 15-27 3-27-3z" fill="#5a5a5a" />
      <path d="M17 28h54L44 75z" fill="#f5f5f5" />
      <path d="M17 28l27 15v32L17 59z" fill="#6d6d6d" />
      <path d="M71 28v31L44 75z" fill="#b5b5b5" />
      <path d="M17 59l27-12v28z" fill="#d8d8d8" />
    </>
  ) },
  { name: "TextEdit", dot: true, art: (
    <>
      {tile("#fafafa")}
      <path d="M0 23h88M0 34h88M0 45h88M0 55h88M0 66h88M6 76h76" stroke="#b5b5b8" strokeWidth="1.600" />
      <path d="M15 1v86" stroke="#f0b5b5" strokeWidth="1.600" />
      <path d="M77-9l7 2-24 72-10-3z" fill="#a9b4c2" />
      <path d="M77-9l4 1-25 72-6-2z" fill="#d6dde5" />
      <path d="M77-9l-18 42" stroke="#35608e" strokeWidth="2" />
      <path d="M50 62l10 3-24 27z" fill="#8f949b" />
      <path d="M39 84l4 2-8 6z" fill="#333" />
    </>
  ) },
  { separator: true, name: "separator" },
  { name: "Downloads", art: (
    <>
      <rect x="8" y="2" width="72" height="56" rx="6" fill="#5fb4ee" />
      <path d="M11 8h6V-3h56l4 34v57a3 3 0 0 1-3 3H14a3 3 0 0 1-3-3z" fill="#f3f3f3" />
      <path d="M52-3h20v31l5 3-20-6z" fill="#fff" stroke="#c9c9c9" />
      <rect x="39" y="5" width="10" height="48" fill="#4a4c50" />
      <path d="M40 8h8M40 14h8M40 20h8M40 38h8M40 44h8" stroke="#bbb" strokeWidth="2" />
      <rect x="41" y="14" width="6" height="36" rx="3" fill="#a9acb2" />
      <text x="44" y="82" textAnchor="middle" fontSize="13" fill="#77787b">ZIP</text>
    </>
  ) },
  { name: "Screenshots", art: (
    <>
      <rect x="9" y="4" width="70" height="20" fill="#6e2c14" stroke="#fff" strokeWidth="3" />
      <rect x="4" y="11" width="80" height="20" fill="#541f28" stroke="#fff" strokeWidth="3" />
      <rect x="0" y="18" width="88" height="60" fill="#141a30" stroke="#fff" strokeWidth="4" />
      <path d="M3 22h82v4H3z" fill="#5e2d1d" />
      <path d="M4 36h18v34H4zM66 36h18v34H66z" fill="#0e1220" />
      <path d="M25 36h38v12H25z" fill="#e8efff" />
      <path d="M25 50h38v20H25z" fill="#23305a" />
      <path d="M66 44h18" stroke="#8438dd" strokeWidth="3" />
      <path d="M5 50h16M5 66h16" stroke="#4fa255" strokeWidth="2" />
      <path d="M6 73h76" stroke="#c9b8c4" strokeWidth="3" strokeDasharray="3 1.500" />
    </>
  ) },
  { name: "Trash", art: (
    <>
      <path d="M6 8l76 0-9 78c-1 8-57 8-58 0z" fill="url(#gTrash)" />
      <ellipse cx="44" cy="6" rx="38" ry="10" fill="#4c4f52" stroke="#989b9e" strokeWidth="1.500" />
      <path d="M10 4l12-10 10 4 10-6 12 4 12-2 10 10-6 8-26 4-22-2z" fill="#dedede" />
      <path d="M26-2l8 12-12 2zM48-4l10 14-14-2zM64-4l-6 14 12 0z" fill="#8c8c8c" />
      <path d="M34 4l8-3 4 6-8 3z" fill="#4fa3e0" />
    </>
  ) },
];

function Dock() {
  return (
    <div className="relative h-[154px] shrink-0 px-[98px] pt-[6px]">
      <svg className="absolute size-0" aria-hidden="true">
        <defs>
          <linearGradient id="gFinder" x1="0" y1="0" x2="0" y2="1"><stop offset="0" stopColor="#58bdf5" /><stop offset="1" stopColor="#3468e8" /></linearGradient>
          <linearGradient id="gMusic" x1="0" y1="0" x2="0" y2="1"><stop offset="0" stopColor="#ea6278" /><stop offset="1" stopColor="#e83844" /></linearGradient>
          <linearGradient id="gSettings" x1="0" y1="0" x2="0" y2="1"><stop offset="0" stopColor="#d3dfe6" /><stop offset="1" stopColor="#8d8b89" /></linearGradient>
          <linearGradient id="gMessages" x1="0" y1="0" x2="0" y2="1"><stop offset="0" stopColor="#8cf58a" /><stop offset="1" stopColor="#55bf4b" /></linearGradient>
          <linearGradient id="gTrash" x1="0" y1="0" x2="1" y2="0"><stop offset="0" stopColor="#5e6164" /><stop offset=".4" stopColor="#8b8e91" /><stop offset="1" stopColor="#55585b" /></linearGradient>
        </defs>
      </svg>
      <div className="relative flex h-[138px] items-start justify-between rounded-[40px] border-2 border-white/20 bg-[linear-gradient(90deg,#1a1f25_0%,#35282a_6%,#30262a_10%,#25201e_22%,#231e1b_45%,#2a2021_62%,#431c30_70%,#4c1a2f_80%,#66201f_90%,#6a2318_96%,#551e15_100%)] pt-[18px] pr-4 pl-[18px]">
        {dockApps.map((a) =>
          a.separator ? (
            <span key={a.name} className="mx-3 -mt-[3px] h-[102px] w-[2px] bg-white/30" />
          ) : (
            <div key={a.name} className="relative size-[88px]">
              {a.large ? (
                <svg viewBox="0 0 108 108" className="absolute -top-[10px] -left-[10px] size-[108px]">{a.art}</svg>
              ) : (
                <svg viewBox="0 0 88 88" className="size-[88px] overflow-visible">{a.art}</svg>
              )}
              {a.badge && (
                <span className="absolute -top-[10px] -right-[13px] flex h-[42px] min-w-[42px] items-center justify-center rounded-full bg-[#e04b3e] px-[5px] text-[23px] text-white">{a.badge}</span>
              )}
              {a.dot && <span className="absolute -bottom-[26px] left-10 size-2 rounded-full bg-[#b0a6a6]" />}
            </div>
          )
        )}
      </div>
    </div>
  );
}

function BackgroundWindows() {
  return (
    <>
      <div className="absolute bottom-0 left-[188px] flex h-[154px] w-[1842px] bg-[#1b1b1b]">
        <div className="flex w-[400px] items-end overflow-hidden border-x-2 border-black/60 bg-[#251c1b]">
          <span className="-mb-[14px] ml-[68px] text-[26px] leading-8 font-bold text-[#c9c2c1]">Key Points</span>
        </div>
      </div>
      <div className="absolute right-[90px] bottom-[150px] z-20 flex h-[4px] w-[642px] items-end overflow-hidden">
        <span className="mr-5 h-full w-[268px] bg-[linear-gradient(90deg,#7a5a50,#51624a_30%,#8a6a60_50%,#7a2850_60%,#77777c_80%)]" />
        <span className="-mb-[9px] text-[20px] leading-8 font-bold whitespace-nowrap text-[#8a8a8a]">H26 #960 Votes Decided! What</span>
      </div>
    </>
  );
}

export default function App() {
  return (
    <div className="relative flex h-screen flex-col overflow-hidden bg-[linear-gradient(90deg,#020d1c_0%,#04101f_50%,#3a0d30_70%,#4a1026_82%,#7c2415_94%,#8f2f16_100%)] font-[Inter,sans-serif]">
      <BackgroundWindows />
      <MenuBar />
      <BrowserWindow />
      <Dock />
    </div>
  );
}
